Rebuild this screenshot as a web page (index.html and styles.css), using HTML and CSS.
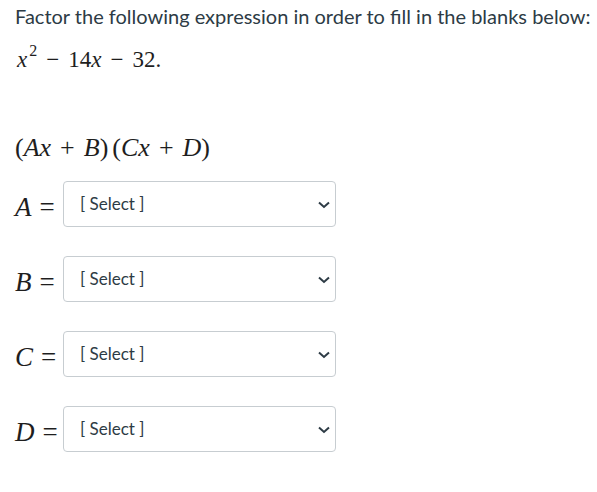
FILE: index.html
```html
<!DOCTYPE html>
<html>
<head>
<meta charset="utf-8">
<link rel="stylesheet" href="styles.css">
</head>
<body>
<div class="page">
  <p class="prompt">Factor the following expression in order to fill in the blanks below:</p>
  <p class="math expr"><i>x</i><sup>2</sup><span class="op">−</span>14<i>x</i><span class="op">−</span>32.</p>
  <p class="math form">(<i>A</i><i>x</i><span class="op">+</span><i>B</i>)<span class="gap"></span>(<i>C</i><i>x</i><span class="op">+</span><i>D</i>)</p>
  <div class="rows">
    <div class="row">
      <span class="math label"><i>A</i><span class="eq">=</span></span>
      <div class="select"><span class="sel-text">[ Select ]</span><svg class="chev" width="12" height="8" viewBox="0 0 12 8"><path d="M1 1.5 L6 6 L11 1.5" fill="none" stroke="#2d3b45" stroke-width="2"/></svg></div>
    </div>
    <div class="row">
      <span class="math label"><i>B</i><span class="eq">=</span></span>
      <div class="select"><span class="sel-text">[ Select ]</span><svg class="chev" width="12" height="8" viewBox="0 0 12 8"><path d="M1 1.5 L6 6 L11 1.5" fill="none" stroke="#2d3b45" stroke-width="2"/></svg></div>
    </div>
    <div class="row">
      <span class="math label"><i>C</i><span class="eq">=</span></span>
      <div class="select"><span class="sel-text">[ Select ]</span><svg class="chev" width="12" height="8" viewBox="0 0 12 8"><path d="M1 1.5 L6 6 L11 1.5" fill="none" stroke="#2d3b45" stroke-width="2"/></svg></div>
    </div>
    <div class="row">
      <span class="math label"><i>D</i><span class="eq">=</span></span>
      <div class="select"><span class="sel-text">[ Select ]</span><svg class="chev" width="12" height="8" viewBox="0 0 12 8"><path d="M1 1.5 L6 6 L11 1.5" fill="none" stroke="#2d3b45" stroke-width="2"/></svg></div>
    </div>
  </div>
</div>
</body>
</html>
```
FILE: styles.css
```css
html, body {
  margin: 0;
  padding: 0;
  background: #ffffff;
}
.page {
  padding: 0 0 0 15px;
  color: #2d3b45;
  font-family: Lato, "Liberation Sans", sans-serif;
}
.prompt {
  margin: 0;
  padding-top: 4px;
  font-size: 20px;
  line-height: 24px;
  white-space: nowrap;
}
.math {
  font-family: "Liberation Serif", "DejaVu Serif", serif;
  color: #1e1e1e;
}
.math i {
  font-style: italic;
}
.expr {
  margin: 17px 0 0 2px;
  font-size: 23px;
  line-height: 30px;
}
.expr sup {
  font-size: 16px;
  vertical-align: 11px;
  line-height: 0;
  margin-left: 2px;
}
.expr .op {
  margin: 0 9px;
}
.op {
  margin: 0 9px;
}
.form {
  margin: 57px 0 0 0;
  font-size: 26px;
  line-height: 32px;
}
.gap {
  display: inline-block;
  width: 4px;
}
.rows {
  margin-top: 17px;
  display: flex;
  flex-direction: column;
  gap: 29px;
}
.row {
  display: flex;
  align-items: flex-start;
}
.label {
  box-sizing: border-box;
  width: 48px;
  height: 46px;
  font-size: 27px;
  line-height: 38px;
  padding-top: 7px;
  white-space: nowrap;
}
.eq {
  margin-left: 8px;
}
.select {
  position: relative;
  box-sizing: border-box;
  width: 273px;
  height: 46px;
  border: 1px solid #c7cdd1;
  border-radius: 4px;
  padding-left: 16px;
  line-height: 44px;
}
.sel-text {
  font-size: 17px;
  color: #2d3b45;
}
.chev {
  position: absolute;
  right: 5px;
  top: 19px;
}
```
